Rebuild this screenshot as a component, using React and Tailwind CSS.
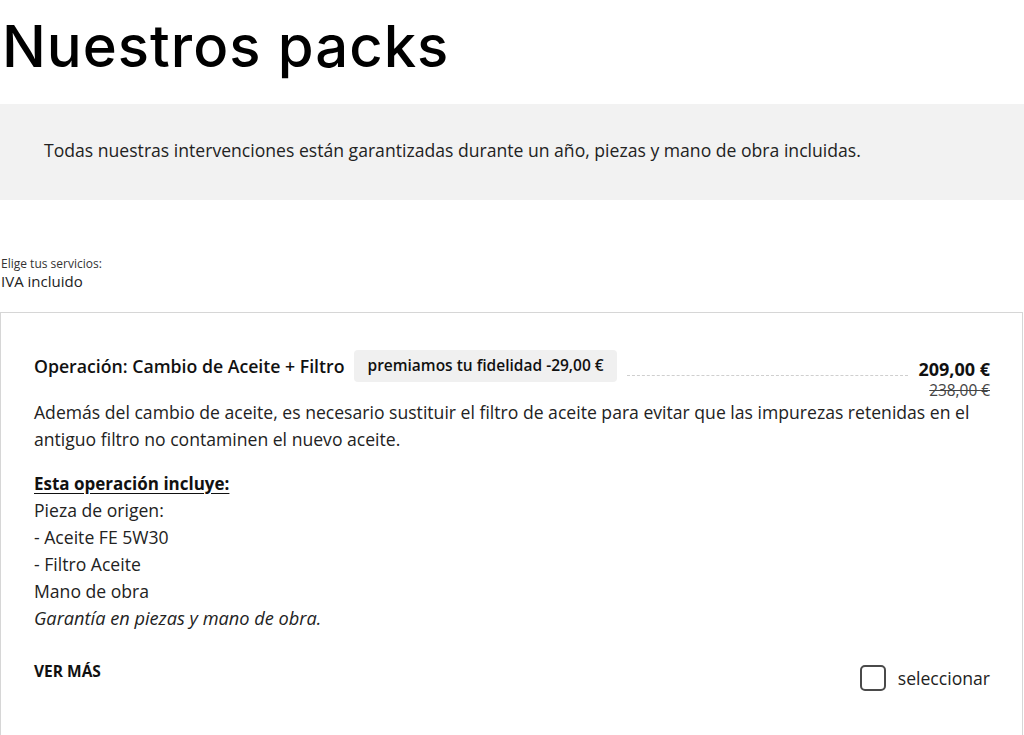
import React, { useState } from 'react';

const body = "font-['Open_Sans',sans-serif]";

const App = () => {
  const [checked, setChecked] = useState(false);

  return (
    <div className={`min-h-screen bg-white text-[#1a1a1a] ${body}`}>
      {/* Title */}
      <h1 className="font-['Inter',sans-serif] text-[58px] font-medium leading-none pl-[2px] pt-[17px] pb-[29px] tracking-[1px] text-black">
        Nuestros packs
      </h1>

      {/* Guarantee banner */}
      <div className="bg-[#f2f2f2] h-[96px] pl-[44px] pt-[34px]">
        <p className="text-[17.6px] leading-[24px] text-[#222]">
          Todas nuestras intervenciones están garantizadas durante un año, piezas y mano de obra incluidas.
        </p>
      </div>

      {/* Services header */}
      <div className="pt-[56px] pl-[1px]">
        <p className="text-[12px] leading-[16px] text-[#333]">Elige tus servicios:</p>
        <p className="text-[15px] leading-[18px] text-[#222]">IVA incluido</p>
      </div>

      {/* Pack card */}
      <div className="mt-[22px] border border-[#d6d6d6] mr-[1px] pl-[33px] pr-[32px] pt-[37px] pb-[60px]">
        <div className="flex items-start">
          <h2 className="text-[17.7px] font-semibold leading-[32px] text-[#111] whitespace-nowrap">
            Operación: Cambio de Aceite + Filtro
          </h2>
          <span className="ml-[10px] bg-[#f0f0f0] rounded-[4px] px-[13px] h-[32px] flex items-center text-[15.5px] font-semibold text-[#111] whitespace-nowrap">
            premiamos tu fidelidad -29,00 €
          </span>
          <div className="flex-1 mx-[10px] mt-[25px] border-t border-dashed border-[#cfcfcf]" />
          <div className="text-right pt-[8px]">
            <p className="text-[18px] font-bold leading-[22px] text-[#111]">209,00 €</p>
            <p className="text-[15.4px] leading-[22px] line-through text-[#444]">238,00 €</p>
          </div>
        </div>

        <p className="text-[17.6px] leading-[27px] text-[#222] -mt-[3px]">
          Además del cambio de aceite, es necesario sustituir el filtro de aceite para evitar que las impurezas retenidas en el antiguo filtro no contaminen el nuevo aceite.
        </p>

        <div className="mt-[17px] text-[17.6px] leading-[27px] text-[#222]">
          <p className="text-[17px] font-bold underline underline-offset-[3px] text-[#111]">Esta operación incluye:</p>
          <p>Pieza de origen:</p>
          <p>- Aceite FE 5W30</p>
          <p>- Filtro Aceite</p>
          <p>Mano de obra</p>
          <p className="italic text-[18.2px]">Garantía en piezas y mano de obra.</p>
        </div>

        <div className="mt-[28px] flex items-start justify-between">
          <button className="text-[15.5px] font-bold uppercase text-[#111] leading-[20px] mt-[1px]">
            Ver más
          </button>
          <label className="flex items-center gap-[12px] cursor-pointer mt-[5px]">
            <input
              type="checkbox"
              checked={checked}
              onChange={() => setChecked(!checked)}
              className="appearance-none w-[26px] h-[26px] rounded-[5px] border-2 border-[#4a4a4a] checked:bg-black"
            />
            <span className="text-[17.6px] text-[#222]">seleccionar</span>
          </label>
        </div>
      </div>
    </div>
  );
};

export default App;
